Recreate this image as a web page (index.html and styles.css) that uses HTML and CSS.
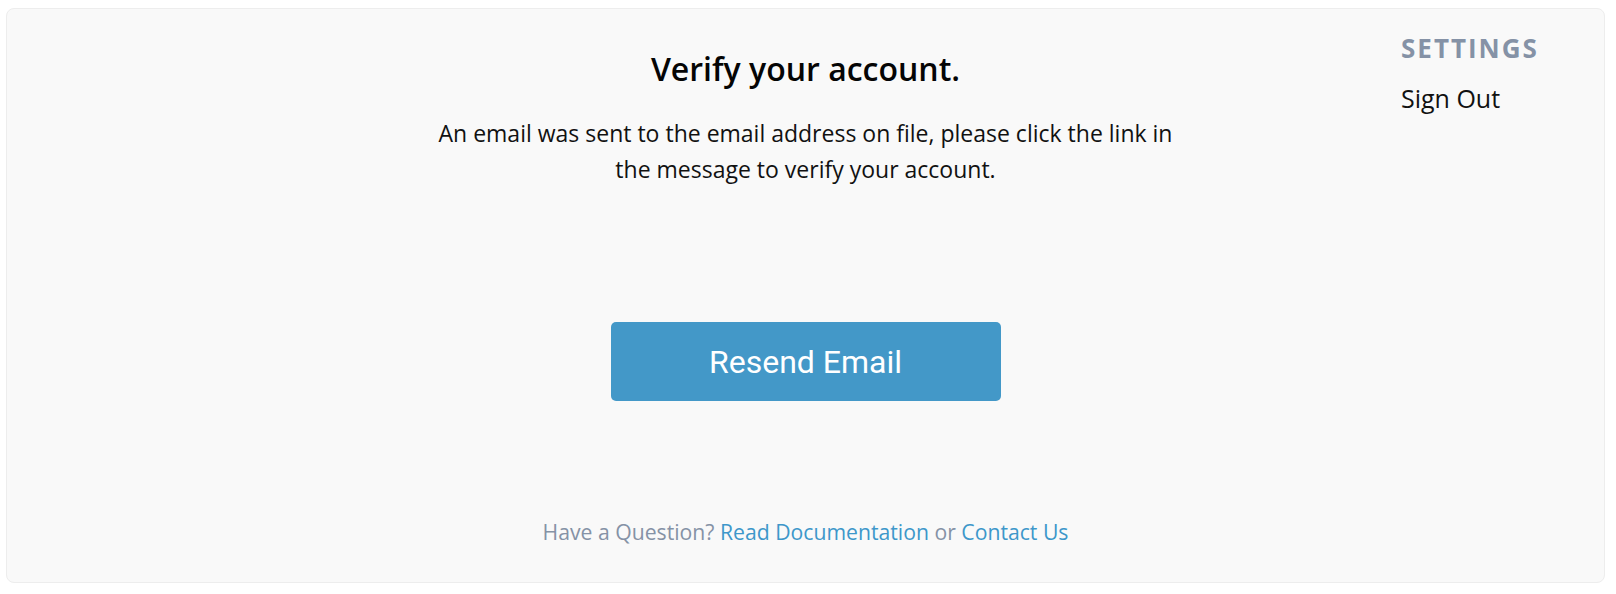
FILE: index.html
```html
<!DOCTYPE html>
<html lang="en">
<head>
<meta charset="utf-8">
<title>Verify your account</title>
<link rel="stylesheet" href="styles.css">
</head>
<body>
  <div class="card">
    <div class="top">
      <div class="spacer"></div>
      <div class="intro">
        <h1 class="title">Verify your account.</h1>
        <p class="message">An email was sent to the email address on file, please click the link in the message to verify your account.</p>
      </div>
      <nav class="side-nav">
        <div class="nav-heading">SETTINGS</div>
        <a class="nav-link" href="#">Sign Out</a>
      </nav>
    </div>
    <div class="action">
      <button class="btn-primary" type="button">Resend Email</button>
    </div>
    <p class="help">Have a Question? <a href="#" class="help-link">Read Documentation</a> or <a href="#" class="help-link">Contact Us</a></p>
  </div>
</body>
</html>
```
FILE: styles.css
```css
html, body {
  margin: 0;
  background: #ffffff;
}
body {
  padding: 8px 11px 11px 6px;
  font-family: "Open Sans", "Noto Sans", sans-serif;
  color: #111;
}
.card {
  box-sizing: border-box;
  height: 575px;
  background: #f9f9f9;
  border: 1px solid #ededed;
  border-radius: 8px;
  display: flex;
  flex-direction: column;
}
.top {
  display: grid;
  grid-template-columns: 1fr 760px 1fr;
}
.intro {
  text-align: center;
  padding-top: 40px;
  display: flex;
  flex-direction: column;
  align-items: center;
}
.title {
  margin: 0;
  font-size: 32px;
  font-weight: 600;
  line-height: 40px;
  color: #050505;
}
.message {
  margin: 26px 0 0;
  max-width: 750px;
  font-size: 23px;
  line-height: 36px;
  color: #111;
}
.side-nav {
  justify-self: end;
  width: 203px;
  padding-top: 24px;
  display: flex;
  flex-direction: column;
}
.nav-heading {
  font-size: 26px;
  font-weight: 700;
  color: #8592a6;
  line-height: 30px;
  letter-spacing: 2px;
}
.nav-link {
  margin-top: 21px;
  font-size: 25px;
  line-height: 28px;
  color: #111;
  text-decoration: none;
}
.action {
  display: flex;
  justify-content: center;
  padding-top: 135px;
}
.btn-primary {
  width: 390px;
  height: 79px;
  border: none;
  border-radius: 5px;
  background: #4398c8;
  color: #fff;
  font-family: "Roboto", sans-serif;
  font-size: 32px;
  font-weight: 400;
  cursor: pointer;
}
.help {
  margin: auto 0 36px;
  text-align: center;
  font-size: 21.2px;
  line-height: 28px;
  color: #8592a6;
}
.help-link {
  color: #3d97ca;
  text-decoration: none;
}
```
